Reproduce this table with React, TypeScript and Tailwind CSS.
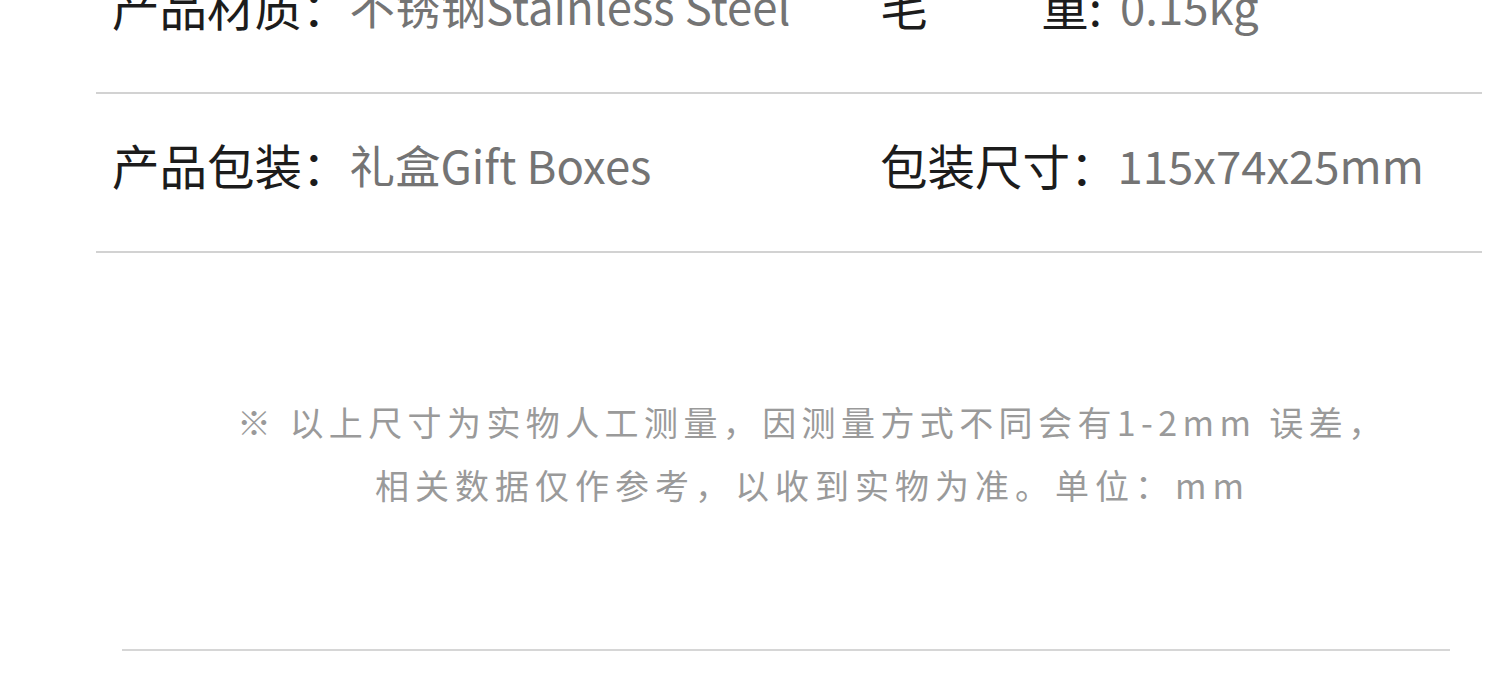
const font = { fontFamily: '"Noto Sans CJK SC", "Noto Sans", sans-serif' };

const specs = [
  { label: '产品材质：', value: '不锈钢Stainless Steel', label2: 'weight', value2: '0.15kg' },
  { label: '产品包装：', value: '礼盒Gift Boxes', label2: '包装尺寸：', value2: '115x74x25mm' },
];

const App = () => {
  return (
    <div className="w-[1500px] h-[692px] overflow-hidden bg-white" style={font}>
      <div className="ml-[96px] w-[1386px] -mt-[65px]">
        {specs.map((row) => (
          <div
            key={row.label}
            className="h-[159px] flex items-center pl-[16px] pb-[15px] border-b-2 border-[#d2d2d2] text-[47.5px] leading-none"
          >
            <div className="w-[768px] flex items-center whitespace-nowrap">
              <span className="text-[#1c1c1c]">{row.label}</span>
              <span className="text-[45.5px] text-[#747474]">{row.value}</span>
            </div>
            <div className="flex items-center whitespace-nowrap">
              {row.label2 === 'weight' ? (
                <span className="w-[240px] flex items-center text-[#1c1c1c]">
                  <span>毛</span>
                  <span className="flex-1" />
                  <span>重</span>
                  <span className="mr-[18px]">:</span>
                </span>
              ) : (
                <span className="text-[#1c1c1c]">{row.label2}</span>
              )}
              <span className="text-[45.5px] text-[#747474]">{row.value2}</span>
            </div>
          </div>
        ))}
      </div>

      <div className="pt-[137px] text-[34px] leading-[63px] text-[#9a9a9a] whitespace-nowrap">
        <p className="pl-[237px] tracking-[5.4px]">※ 以上尺寸为实物人工测量，因测量方式不同会有1-2mm 误差，</p>
        <p className="pl-[375px] tracking-[6px]">相关数据仅作参考，以收到实物为准。单位：mm</p>
      </div>

      <div className="ml-[122px] w-[1328px] mt-[133px] h-[2px] bg-[#d6d6d6]" />
    </div>
  );
};

export default App;
